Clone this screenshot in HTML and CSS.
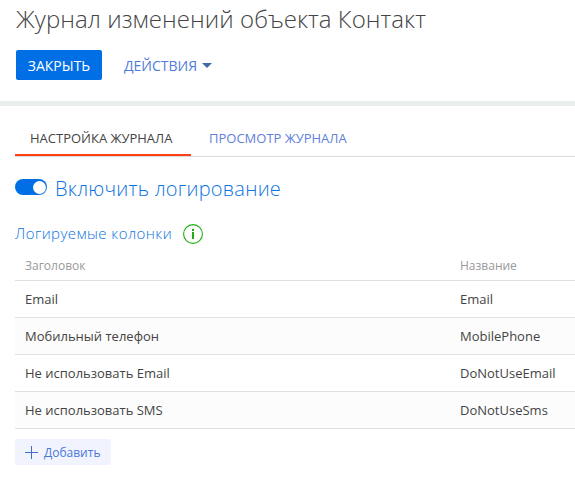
FILE: index.html
```html
<!DOCTYPE html>
<html lang="ru">
<head>
<meta charset="utf-8">
<title>Журнал изменений</title>
<link rel="stylesheet" href="styles.css">
</head>
<body>
<header class="header">
  <h1 class="title"><span>Журнал изменений объекта Контакт</span></h1>
  <div class="toolbar">
    <button class="btn-primary"><span>ЗАКРЫТЬ</span></button>
    <button class="btn-link"><span>ДЕЙСТВИЯ</span><i class="caret"></i></button>
  </div>
</header>
<main class="content">
  <nav class="tabs">
    <a class="tab active"><span>НАСТРОЙКА ЖУРНАЛА</span></a>
    <a class="tab"><span>ПРОСМОТР ЖУРНАЛА</span></a>
  </nav>
  <div class="toggle-row"><span class="toggle"></span><span class="toggle-label">Включить логирование</span></div>
  <div class="section"><span class="section-label">Логируемые колонки</span>
    <svg class="info" viewBox="0 0 20 20"><circle cx="10" cy="10" r="9.4"/><path d="M9 5h2v2H9zM9 8h2v7H9z"/></svg>
  </div>
  <div class="grid">
    <div class="row head"><span>Заголовок</span><span>Название</span></div>
    <div class="row"><span>Email</span><span>Email</span></div>
    <div class="row alt"><span>Мобильный телефон</span><span>MobilePhone</span></div>
    <div class="row"><span>Не использовать Email</span><span>DoNotUseEmail</span></div>
    <div class="row alt"><span>Не использовать SMS</span><span>DoNotUseSms</span></div>
  </div>
  <button class="add"><svg viewBox="0 0 13 13"><path d="M6.5 0v13M0 6.5h13"/></svg><span>Добавить</span></button>
</main>
</body>
</html>
```
FILE: styles.css
```css
* { box-sizing: border-box; }
body { margin: 0; width: 575px; height: 480px; overflow: hidden; background: #fff; font-family: "Open Sans", sans-serif; font-size: 13px; color: #444; }
button { font: inherit; border: 0; margin: 0; padding: 0; background: none; }
.header { height: 106px; border-bottom: 5px solid #e9eded; padding-left: 16px; }
.title { margin: 0; height: 50px; padding-top: 2px; font-size: 24px; line-height: 34px; font-weight: 300; letter-spacing: 0.07px; white-space: nowrap; }
.toolbar { display: flex; }
.btn-primary { width: 86px; height: 30px; background: #006fe5; color: #fff; border-radius: 2px; font-size: 14px; }
.btn-link { display: flex; align-items: center; gap: 5px; margin-left: 22px; height: 30px; color: #4f7bdc; font-size: 14px; }
.caret { border: 5px solid transparent; border-top-color: #4468a8; border-bottom: 0; }
.content { padding-left: 15px; }
.tabs { display: flex; height: 51px; border-bottom: 1px solid #dcdcdc; }
.tab { height: 50px; padding: 22px 0 0 15px; line-height: 20px; color: #5f80dc; white-space: nowrap; }
.tab.active { width: 176px; border-bottom: 2px solid #ff4013; color: #444; }
.tab + .tab { padding-left: 18px; }
.toggle-row { display: flex; align-items: center; height: 62px; color: #0d74e0; }
.toggle { width: 32px; height: 16px; margin-top: -2px; border-radius: 8px; background: #006fe5; padding: 1.5px 1px 1.5px 18px; }
.toggle::after { content: ""; display: block; width: 13px; height: 13px; border-radius: 50%; background: #fff; }
.toggle-label { margin-left: 8px; font-size: 20px; font-weight: 300; letter-spacing: 0.23px; }
.section { display: flex; align-items: center; height: 30px; color: #0d74e0; font-size: 15px; }
.section-label { width: 157px; margin-top: -2px; font-weight: 300; letter-spacing: 0.44px; white-space: nowrap; }
.info { width: 20px; height: 20px; margin-left: 11px; }
.info circle { fill: none; stroke: #22ac14; stroke-width: 1.1; }
.info path { fill: #22ac14; }
.row { display: grid; grid-template-columns: 435px 1fr; align-items: center; height: 37px; padding-left: 10px; border-bottom: 1px solid #e0e0e0; }
.head { height: 32px; padding-top: 1px; font-size: 12px; color: #999; }
.alt { background: #fcfcfc; }
.add { display: flex; align-items: center; margin-top: 10px; width: 96px; height: 26px; padding-left: 10px; border-radius: 2px; background: #f1f4fe; color: #4b78d8; font-size: 12px; }
.add svg { width: 13px; height: 13px; margin-right: 6px; fill: none; stroke: #3f6bd0; }
```
